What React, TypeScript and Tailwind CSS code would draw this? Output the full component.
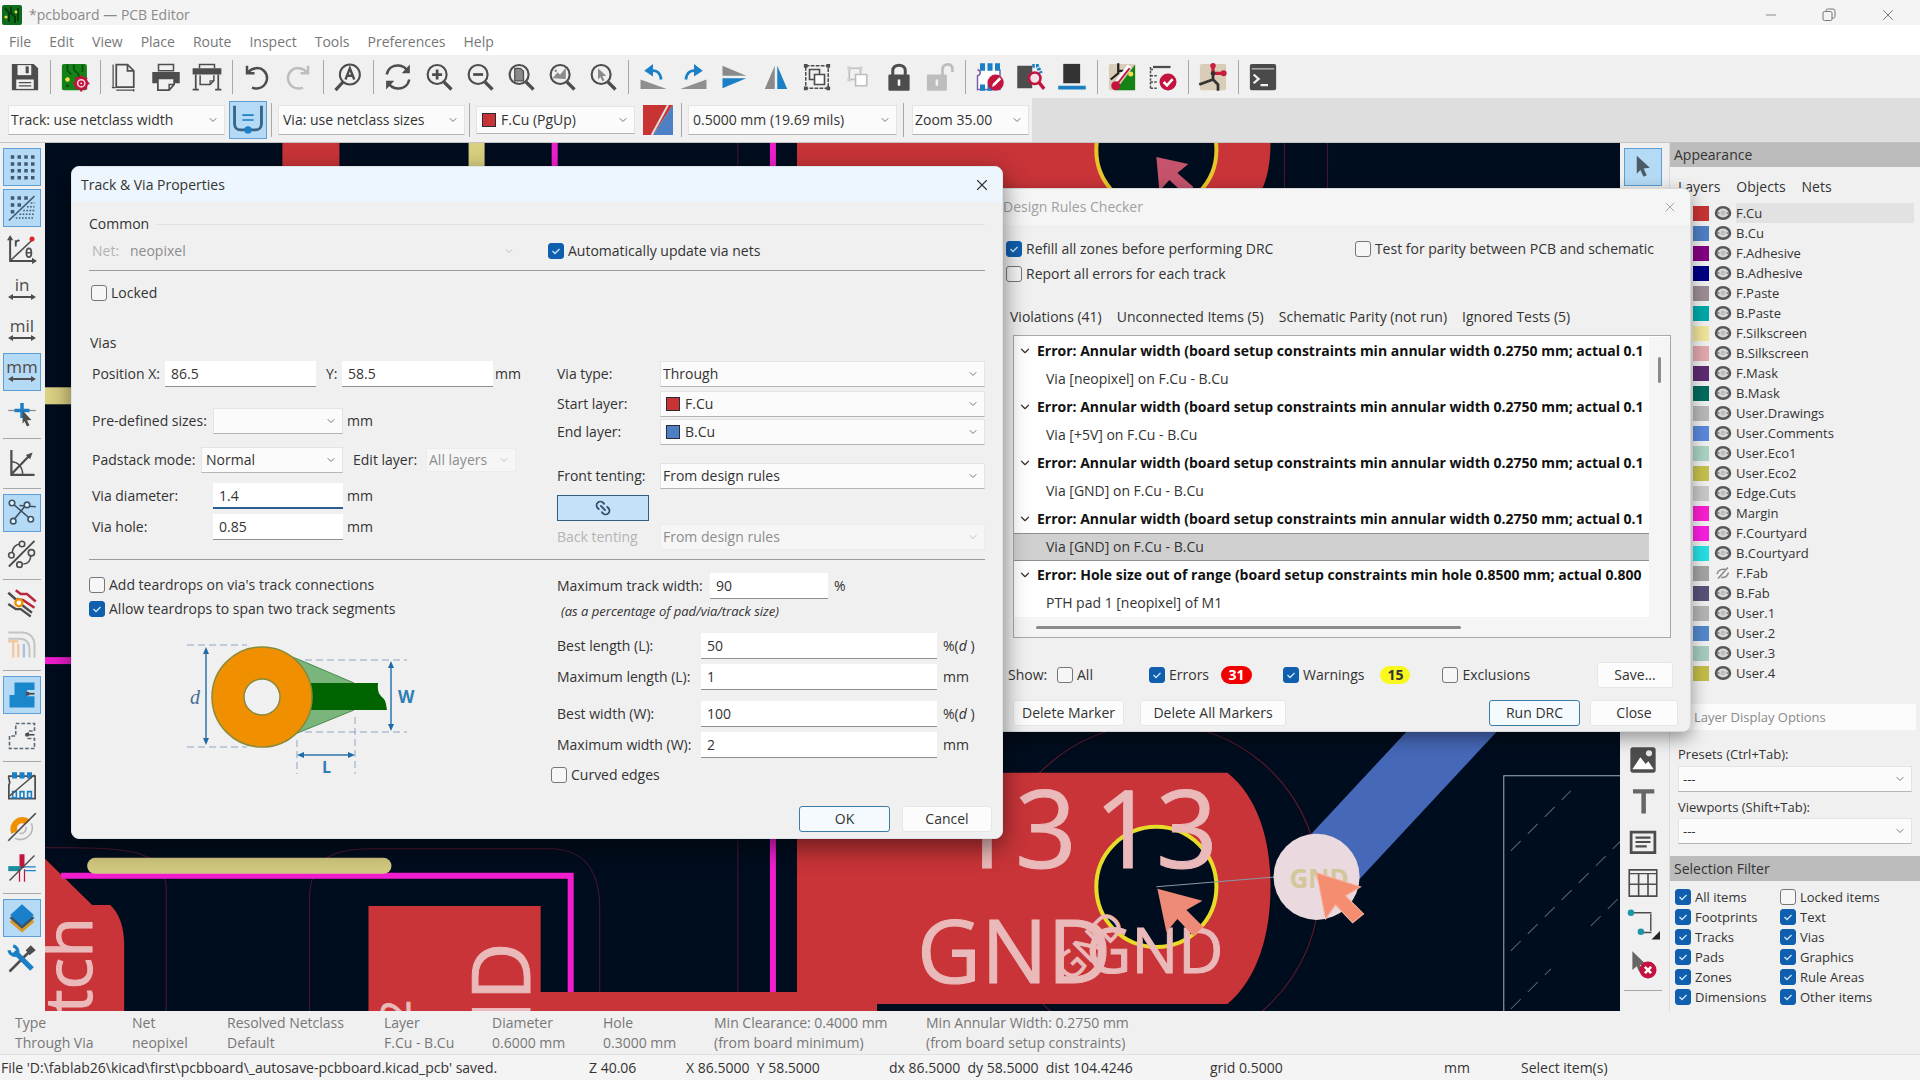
import type { ReactNode } from "react";
import { ChevronDown, X, Minus, Link2 } from "lucide-react";

/* ---------- icons ---------- */

const G = "#4d4d4d";
const B = "#1a7fc4";
const R = "#c2143f";

function Ico({ children, size = "size-[30px]" }: { children: ReactNode; size?: string }) {
  return (
    <svg viewBox="0 0 24 24" className={size} fill="none" stroke={G} strokeWidth="1.6" aria-hidden="true">
      {children}
    </svg>
  );
}

const Lens = ({ children }: { children?: ReactNode }) => (
  <>
    <circle cx="10.5" cy="10" r="7.6" strokeWidth="1.7" />
    <path d="M16 16l6 6" strokeWidth="2.6" />
    {children}
  </>
);

const icons: Record<string, ReactNode> = {
  save: (
    <Ico>
      <path d="M1.5 1.5h17.500l3.500 3.500v17.500h-21z" fill={G} stroke="none" />
      <path d="M6 2.500h11v8H6z" fill="#f0f0f0" stroke="none" />
      <path d="M12.500 3.500h2.500v5.500h-2.500z" fill={G} stroke="none" />
      <path d="M5 14h14v7.500H5z" fill="#f0f0f0" stroke="none" />
      <path d="M7 16.500h10M7 19h10" strokeWidth="1" />
    </Ico>
  ),
  boardSetup: (
    <Ico>
      <rect x="1.500" y="1.500" width="20" height="21" rx="1.500" fill="#148214" stroke="none" />
      <path d="M6 2v5l3 3M11 2v4l4 4V14M18 2v6" stroke="#0b4f12" strokeWidth="1.400" />
      <circle cx="6" cy="14" r="1.800" fill="#f2e24a" stroke="none" />
      <circle cx="6" cy="19" r="1.200" fill="#0b4f12" stroke="none" />
      <circle cx="17" cy="17" r="4.500" fill="#f7d6dd" stroke={R} strokeWidth="2" />
      <circle cx="17" cy="17" r="1.500" fill="#fff" stroke={R} />
      <path d="M17 10.500v2.500M17 21v2.500M10.500 17H13M21 17h2.500M12.500 12.500l1.500 1.500M20 20l1.500 1.500M12.500 21.500l1.500-1.500M20 14l1.500-1.500" stroke={R} strokeWidth="1.800" />
    </Ico>
  ),
  page: (
    <Ico>
      <path d="M5 2h9l5 5v13H5z" strokeWidth="1.400" />
      <path d="M14 2v5h5" strokeWidth="1.400" />
      <path d="M2.500 2v18M1.500 20.500h3M5 22.500h14M19 21.500v2" strokeWidth="1" />
    </Ico>
  ),
  print: (
    <Ico>
      <path d="M6 2h12v5H6z" strokeWidth="1.200" fill="#f0f0f0" />
      <path d="M1 8h22v9h-4v-3H5v3H1z" fill={G} stroke="none" />
      <path d="M5.500 13h13v5l-4 4.500h-9z" fill="#f0f0f0" strokeWidth="1.400" />
      <path d="M14.500 22v-4h4" strokeWidth="1.200" />
    </Ico>
  ),
  plot: (
    <Ico>
      <path d="M0.500 5h23v5h-23z" fill={G} stroke="none" />
      <path d="M6 5V2h12v3" strokeWidth="1.200" />
      <path d="M3 10v12M21 10v12M0.500 22h5M18.500 22h5" strokeWidth="1.400" />
      <path d="M6.500 10.500v7.500h8l3-3v-4.500" strokeWidth="1.200" />
      <path d="M14.500 18v-3h3" strokeWidth="1" />
    </Ico>
  ),
  undo: (
    <Ico>
      <path d="M4 3v6h6" strokeWidth="2" />
      <path d="M4.500 8.500C8 4.500 14 3.500 17.500 7c4 4 3 10-1.500 13-2.500 1.500-5.500 1.500-8 .5" strokeWidth="2" />
    </Ico>
  ),
  redo: (
    <Ico>
      <g stroke="#bdbdbd" strokeWidth="2">
        <path d="M20 3v6h-6" />
        <path d="M19.500 8.500C16 4.500 10 3.500 6.500 7c-4 4-3 10 1.500 13 2.500 1.500 5.500 1.500 8 .5" />
      </g>
    </Ico>
  ),
  find: (
    <Ico>
      <circle cx="13.500" cy="10" r="8" strokeWidth="1.600" />
      <path d="M8 16l-6 6.500" strokeWidth="2.600" />
      <path d="M10 14l3.500-9 3.500 9M11.200 11h4.600" strokeWidth="1.900" />
    </Ico>
  ),
  refresh: (
    <Ico>
      <path d="M3 10C4 5 8 2.500 12.500 2.800c3 .2 5.500 1.700 7 4.200M21 14c-1 5-5 7.500-9.500 7.200-3-.2-5.500-1.700-7-4.200" strokeWidth="2" />
      <path d="M21.500 2v7h-6.500zM2.500 22v-7H9z" fill={G} stroke="none" />
    </Ico>
  ),
  zoomIn: (
    <Ico>
      <Lens>
        <path d="M6.500 10h8M10.500 6v8" strokeWidth="2.200" />
      </Lens>
    </Ico>
  ),
  zoomOut: (
    <Ico>
      <Lens>
        <path d="M6.500 10h8" strokeWidth="2.200" />
      </Lens>
    </Ico>
  ),
  zoomPage: (
    <Ico>
      <Lens>
        <path d="M7 5h4.500L14 7.500V15H7z" fill="#8a8a8a" stroke={G} strokeWidth="1" />
      </Lens>
    </Ico>
  ),
  zoomObjects: (
    <Ico>
      <Lens>
        <path d="M5.500 12.500l3-3.500 2 2 4-5v7z" fill="#8a8a8a" stroke="#8a8a8a" strokeWidth="1" />
        <circle cx="7" cy="7" r="1" fill="#8a8a8a" stroke="none" />
      </Lens>
    </Ico>
  ),
  zoomTool: (
    <Ico>
      <Lens>
        <path d="M8 5l6.500 6-3 .3 1.700 3.200-1.700.8-1.500-3.300L8 14z" fill="#8a8a8a" stroke="none" />
      </Lens>
    </Ico>
  ),
  rotCcw: (
    <Ico>
      <path d="M2 21.500h21L2 14z" fill="#8f8f8f" stroke="none" />
      <path d="M10 7c5-1 8 2 8.500 7" stroke={B} strokeWidth="2.200" />
      <path d="M12 1.500v10L5 7z" fill={B} stroke="none" />
    </Ico>
  ),
  rotCw: (
    <Ico>
      <path d="M22 21.500H1L22 14z" fill="#8f8f8f" stroke="none" />
      <path d="M14 7c-5-1-8 2-8.500 7" stroke={B} strokeWidth="2.200" />
      <path d="M12 1.500v10L19 7z" fill={B} stroke="none" />
    </Ico>
  ),
  flipV: (
    <Ico>
      <path d="M2 3v8h19z" fill="#8a8a8a" stroke="none" />
      <path d="M2 21v-8h19z" fill={B} stroke="none" />
    </Ico>
  ),
  flipH: (
    <Ico>
      <path d="M3 21.500h8V3z" fill="#8a8a8a" stroke="none" />
      <path d="M21 21.500h-8V3z" fill={B} stroke="none" />
    </Ico>
  ),
  group: (
    <Ico>
      <path d="M3 3h18v18H3z" strokeWidth="1.200" strokeDasharray="3 1" />
      <path d="M6 6h8v8H6z" strokeWidth="1.300" />
      <path d="M10 10h8v8h-8z" fill="#fff" strokeWidth="1.300" />
      <path d="M1.500 1.500h3v3h-3zM19.500 1.500h3v3h-3zM1.500 19.500h3v3h-3zM19.500 19.500h3v3h-3z" fill={G} stroke="none" />
    </Ico>
  ),
  ungroup: (
    <Ico>
      <g stroke="#bdbdbd" strokeWidth="1.300">
        <path d="M5 5h9v9H5z" />
        <path d="M10 10h9v9h-9z" fill="#fff" />
        <path d="M3.500 3.500h3v3h-3zM12.500 3.500h3v3h-3zM3.500 12.500h3v3h-3z" fill="#d0d0d0" stroke="none" />
      </g>
    </Ico>
  ),
  lock: (
    <Ico>
      <path d="M7 11V7c0-6 10-6 10 0v4" strokeWidth="2.400" />
      <rect x="3.500" y="10" width="17" height="13" rx="1" fill={G} stroke="none" />
      <path d="M12 14v5" stroke="#fff" strokeWidth="2" />
    </Ico>
  ),
  unlock: (
    <Ico>
      <path d="M14 11V6c0-5.500 8-5.500 8-.5V8" stroke="#bdbdbd" strokeWidth="2.200" />
      <rect x="1.500" y="10" width="16" height="13" rx="1" fill="#bdbdbd" stroke="none" />
      <path d="M9.500 14v5" stroke="#f0f0f0" strokeWidth="2" />
    </Ico>
  ),
  fpEditor: (
    <Ico>
      <path d="M2 6c3 1 3 4 0 5v11h18V6" strokeWidth="1.200" fill="#fff" stroke="#7b5ea8" />
      <path d="M4 1h4v6H4zM10 1h4v6h-4zM16 1h4v6h-4zM4 18h4v5H4zM10 18h4v5h-4z" fill={B} stroke="none" />
      <circle cx="16.500" cy="16.500" r="6.500" fill={R} stroke="none" />
      <path d="M13.500 20l1-2.800 5-5 1.500 1.500-5 5z" fill="#fff" stroke="none" />
    </Ico>
  ),
  update: (
    <Ico>
      <path d="M1 3h12v18H1z" fill={G} stroke="none" />
      <path d="M13 3h4l3 6" stroke={B} strokeWidth="3" strokeDasharray="2 1" />
      <circle cx="15" cy="13" r="4.600" stroke={R} strokeWidth="2" fill="#f3e3e8" />
      <path d="M18.500 16.500l4 5" stroke={R} strokeWidth="2.600" />
    </Ico>
  ),
  viewer3d: (
    <Ico>
      <path d="M5 1.500h13.500V17H5z" fill="#333" stroke="none" />
      <path d="M1 19h22v3H1z" fill={B} stroke="none" />
    </Ico>
  ),
  updatePcb: (
    <Ico>
      <rect x="1.500" y="1.500" width="21" height="21" rx="1.500" fill="#d9cdb8" stroke="none" />
      <path d="M22.500 2v20.500H7z" fill="#148214" stroke="none" />
      <path d="M9 1v8l-6 5M9 7h5" stroke="#222" strokeWidth="1.800" />
      <path d="M5 20l13-17" stroke="#fff" strokeWidth="3.500" />
      <circle cx="7" cy="19" r="3.600" fill={R} stroke="none" />
      <path d="M7 19L18 5" stroke={R} strokeWidth="1.600" />
      <circle cx="19" cy="9.500" r="2" fill="#f2e24a" stroke="none" />
    </Ico>
  ),
  drc: (
    <Ico>
      <path d="M4 4h14" strokeWidth="1.800" />
      <path d="M2 6h3M2 11h6M2 16h6M2 21h6M2 4v17" strokeWidth="1.200" strokeDasharray="2 1" />
      <circle cx="16" cy="16" r="6.800" fill={R} stroke="none" />
      <path d="M12.500 16l2.700 2.700 4.500-5" stroke="#fff" strokeWidth="2" />
    </Ico>
  ),
  schematic: (
    <Ico>
      <rect x="1.500" y="1.500" width="21" height="21" rx="1.500" fill="#d9cdb8" stroke="none" />
      <path d="M12 9v5l4 4v5M12 14l-11 4" stroke="#333" strokeWidth="2.200" />
      <path d="M12 3v6h8" stroke="#c81e3c" strokeWidth="2.600" />
      <circle cx="12" cy="3" r="2.200" fill="#c81e3c" stroke="none" />
      <circle cx="20.500" cy="9" r="2.400" fill="#c81e3c" stroke="none" />
      <circle cx="12" cy="9" r="1.800" fill="#333" stroke="none" />
    </Ico>
  ),
  console: (
    <Ico>
      <rect x="1.500" y="1.500" width="21" height="21" rx="1.500" fill="#4a4a4a" stroke="none" />
      <path d="M3 5.500h18" stroke="#ddd" strokeWidth=".8" />
      <path d="M4.500 10l4 3.500-4 3.500M10 18.500h6" stroke="#f0f0f0" strokeWidth="1.800" />
    </Ico>
  ),
  autoTrack: (
    <Ico size="size-[34px]">
      <path d="M2.500 2v12.500c0 3 2 4.500 4 4.500h11c2 0 4-1.500 4-4.500V2" stroke="#3b6386" strokeWidth="2" />
      <path d="M8 8.500h8M8 12h8" stroke={B} strokeWidth="1.200" />
      <circle cx="12" cy="19" r="2.600" fill={B} stroke="none" />
    </Ico>
  ),
  layerPair: (
    <Ico>
      <path d="M0 0h24L8 24H0z" fill="#c83434" stroke="none" />
      <path d="M24 0v24H8z" fill="#4d7fc4" stroke="none" />
      <path d="M20 0L7 24" stroke="#ddd" strokeWidth="1.600" />
    </Ico>
  ),
  grid: (
    <Ico>
      <path d="M3 4h19M3 9.500h19M3 15h19M3 20.500h19" stroke="#3f5a75" strokeWidth="2.800" strokeDasharray="2.800 2.600" />
    </Ico>
  ),
  gridOver: (
    <Ico>
      <path d="M3 4h14M3 9.500h9M3 15h4" stroke="#3f5a75" strokeWidth="2.800" strokeDasharray="2.800 2.600" />
      <path d="M1.500 22L22 2.500" stroke="#3f5a75" strokeWidth="1.200" />
      <path d="M19 8h3M16 11h6M13 14h9M10 17h12M7 20h15" stroke="#3f5a75" strokeWidth="1.300" strokeDasharray="1.300 1.200" />
    </Ico>
  ),
  polar: (
    <Ico>
      <path d="M2.500 2v19.500H22" />
      <path d="M3 21L20 5" strokeWidth="1.300" />
      <circle cx="20" cy="4" r="2" fill="#d22" stroke="none" />
      <path d="M0 5l2.500-4L5 5zM20 19l4 2.500-4 2.500z" fill={G} stroke="none" />
      <path d="M7 10V5M7 7c1-2 2-2 3-1.500" strokeWidth="1.500" />
      <ellipse cx="17.500" cy="15" rx="2" ry="3.500" strokeWidth="1.400" />
      <path d="M15.500 15h4" strokeWidth="1.200" />
    </Ico>
  ),
  cursor: (
    <Ico>
      <path d="M1 10h22" strokeWidth="1" stroke="#888" />
      <path d="M12 4v12M6 10h12" stroke={B} strokeWidth="2.800" />
      <path d="M12.500 10l7 7.500-3.500.2 2 4-2 1-2-4.200-1.500 2z" fill={G} stroke="none" />
    </Ico>
  ),
  angle: (
    <Ico>
      <path d="M3.500 1.500v20H22M3.500 21L18 6" strokeWidth="1.800" />
      <path d="M3.500 11c5 0 9 4 9 10" strokeWidth="1.200" />
      <path d="M20.500 3.500l-5.500 2 3.500 3.500z" fill={G} stroke="none" />
    </Ico>
  ),
  ratsnest: (
    <Ico>
      <path d="M4 4l15 13M5 18l9-11M10 6l13 1" stroke="#3d5468" strokeWidth="1.300" />
      <g fill="#e8f4ff" stroke="#3d5468" strokeWidth="1.300">
        <circle cx="4" cy="4" r="2.200" />
        <circle cx="16" cy="5.500" r="2.200" />
        <circle cx="5" cy="18.500" r="2.200" />
        <circle cx="19" cy="17" r="2.200" />
      </g>
    </Ico>
  ),
  curved: (
    <Ico>
      <path d="M1.500 22L22 1.500" strokeWidth="1.500" />
      <path d="M4 12c0-5 3-8 7-8M13 20c4 0 6-3 6-7" strokeWidth="1.300" />
      <g fill="#f0f0f0" strokeWidth="1.300">
        <circle cx="12" cy="4" r="2.200" />
        <circle cx="3.500" cy="13" r="2.200" />
        <circle cx="10" cy="20.500" r="2.200" />
        <circle cx="19.500" cy="11" r="2.500" />
      </g>
    </Ico>
  ),
  netHl: (
    <Ico>
      <path d="M7 1l4 3h5l7 6M8 8l5 1 9 6" stroke="#b8283f" strokeWidth="2" />
      <path d="M1 3l8 7" strokeWidth="2" />
      <path d="M1 12l6 4h4l8 6M11 12l9 7" strokeWidth="1.800" />
      <circle cx="9.500" cy="11" r="2.800" fill="#fff" stroke="#f09000" strokeWidth="1.800" />
    </Ico>
  ),
  netColors: (
    <Ico>
      <path d="M1 7h9c5 0 8 3 8 9v6" stroke="#c4c4c4" strokeWidth="1.600" />
      <path d="M1 2h11c6 0 10 4 10 10v10" stroke="#c4c4c4" strokeWidth="1.600" />
      <path d="M5 9v13M9 11v11" stroke="#f3c9a4" strokeWidth="2" />
      <path d="M13.500 11v11" stroke="#a9c4de" strokeWidth="2" />
      <path d="M1 9h8" stroke="#f3c9a4" strokeWidth="2" />
    </Ico>
  ),
  zoneFill: (
    <Ico>
      <path d="M6 2h16v6h-6v5h6v9H2V12h4z" fill="#1a86cc" stroke="none" />
      <path d="M16 11h6" stroke={G} strokeWidth="1.500" />
      <circle cx="16.500" cy="11" r="1.600" fill={G} stroke="none" />
    </Ico>
  ),
  zoneOutline: (
    <Ico>
      <path d="M7 2h15v6h-5v6h5v8H2V12h5z" strokeWidth="1.300" strokeDasharray="3 1.500" stroke="#5a6b7a" />
      <circle cx="16" cy="11" r="1.600" fill={G} stroke="none" />
      <path d="M16 11h6" strokeWidth="1.300" />
    </Ico>
  ),
  padSketch: (
    <Ico>
      <path d="M1.500 4c-1 2 2 5 0 7v11h21V4z" strokeWidth="1.400" />
      <path d="M4 1h4v5H4zM10 1h4v5h-4zM16 1h4v5h-4z" fill={B} stroke="none" />
      <path d="M4.500 16.500h3v5h-3zM10.500 16.500h3v5h-3zM16.500 16.500h3v5h-3z" stroke={B} strokeWidth="1.300" />
      <path d="M2 20L22 3" strokeWidth="1.200" />
    </Ico>
  ),
  viaSketch: (
    <Ico>
      <path d="M3.500 17.500a9.500 9.500 0 0 1 15-11l-4 3.500a4 4 0 0 0-6 5z" fill="#f09000" stroke="none" />
      <path d="M19.500 9a9.500 9.500 0 0 1-13 12M15 12a4 4 0 0 1-5 5" stroke="#b5b5b5" strokeWidth="1.200" />
      <path d="M1 23L23 1" strokeWidth="1.400" />
    </Ico>
  ),
  trackSketch: (
    <Ico>
      <path d="M12 1v11" stroke={R} strokeWidth="4" />
      <path d="M1 12.500h10" stroke="#1a8ea0" strokeWidth="4" />
      <path d="M10 13v10M14 13v10" stroke={R} strokeWidth="1" />
      <path d="M14 11h9M14 14h9" stroke={B} strokeWidth="1" />
      <path d="M2 22L22 2" strokeWidth="1.200" />
    </Ico>
  ),
  layersMgr: (
    <Ico>
      <path d="M12 7l10 8-10 8.500L2 15z" fill="#d99a2b" stroke="none" />
      <path d="M12 4l10 8-10 8.500L2 12z" fill="#3b5568" stroke="none" />
      <path d="M12 1l9.500 8.500L12 18 2.500 9.500z" fill="#1a80cc" stroke="none" />
    </Ico>
  ),
  tools: (
    <Ico>
      <path d="M2 22L17 7" strokeWidth="2" />
      <path d="M15 5l4-4 4 4-5 4z" fill={G} stroke="none" />
      <path d="M6 6l14 14" stroke={B} strokeWidth="4.200" />
      <path d="M1.500 5a5 5 0 0 0 7 3.500M5 1.500A5 5 0 0 1 8.500 8" stroke={B} strokeWidth="2.600" />
    </Ico>
  ),
  select: (
    <Ico>
      <path d="M7 3l10.500 9.500-5 .6 2.500 5.400-2.600 1.200-2.500-5.400-2.900 3z" fill="#4d5b66" stroke="none" />
    </Ico>
  ),
  image: (
    <Ico size="size-[32px]">
      <rect x="2.500" y="2.500" width="19" height="19" rx="2" fill={G} stroke="none" />
      <path d="M4 19l6-9 4 5 2-2 4 6z" fill="#fff" stroke="none" />
      <circle cx="16.500" cy="7" r="2.300" fill="#e8e8e8" stroke="none" />
    </Ico>
  ),
  text: (
    <Ico>
      <path d="M4 2.500h17v3.500h-6.700v16h-3.600v-16H4z" fill="#666" stroke="none" />
    </Ico>
  ),
  textBox: (
    <Ico>
      <path d="M2.500 4h19v16.500h-19z" strokeWidth="2.200" />
      <path d="M6 8.500h12M6 12h12M6 15.500h9" strokeWidth="1.700" />
    </Ico>
  ),
  table: (
    <Ico>
      <path d="M1 1.500h22v21H1z" strokeWidth="1.300" />
      <path d="M1 4.500h22" strokeWidth="1" />
      <path d="M8.500 4.500v18M16 4.500v18M1 13h22" strokeWidth="1.300" />
    </Ico>
  ),
  dimension: (
    <Ico size="size-[34px]">
      <path d="M4 4h14M12 18h6M17.500 5v12" strokeWidth="1" />
      <circle cx="3.500" cy="4" r="2.300" fill="#1d96a8" stroke="none" />
      <circle cx="10.500" cy="17.500" r="2.300" fill="#1d96a8" stroke="none" />
      <path d="M24 17v6h-6z" fill="#222" stroke="none" />
    </Ico>
  ),
  deleteTool: (
    <Ico>
      <path d="M3.500 1l11 10.500-5 .5 2 4.500-2.500 1-2-4.500-3.500 3z" fill="#666" stroke="none" />
      <circle cx="16" cy="16" r="6.800" fill={R} stroke="none" />
      <path d="M13.500 13.500l5 5M18.500 13.500l-5 5" stroke="#fff" strokeWidth="2" />
    </Ico>
  ),
};

function UnitIcon({ unit }: { unit: string }) {
  return (
    <span className="flex flex-col items-center pb-1">
      <span className="text-[17px] leading-[18px] text-[#4d4d4d]">{unit}</span>
      <svg viewBox="0 0 28 6" className="h-[6px] w-[28px]" aria-hidden="true">
        <path d="M0 3l5-3v2h18V0l5 3-5 3V4H5v2z" fill={G} />
      </svg>
    </span>
  );
}

/* ---------- controls ---------- */

type ToolDef = { icon: string; active?: boolean } | "sep";

function ToolButton({ icon, active }: { icon: string; active?: boolean }) {
  return (
    <button
      type="button"
      aria-label={icon}
      aria-pressed={!!active}
      className={`flex size-[38px] shrink-0 items-center justify-center border ${active ? "border-[#5b9fd6] bg-[#b5daf5]" : "border-transparent"}`}
    >
      {icons[icon] ?? <UnitIcon unit={icon} />}
    </button>
  );
}

function VTools({ items }: { items: ToolDef[] }) {
  return (
    <>
      {items.map((t, i) =>
        t === "sep" ? (
          <div key={i} className="flex h-[6px] w-[38px] shrink-0 items-center">
            <div className="h-px w-full bg-[#a8a8a8]" />
          </div>
        ) : (
          <ToolButton key={i} icon={t.icon} active={t.active} />
        )
      )}
    </>
  );
}

function Check({ label, on, gap = "gap-1" }: { label: string; on?: boolean; gap?: string }) {
  return (
    <label className={`flex items-center whitespace-nowrap ${gap}`}>
      <span className="relative flex size-4 shrink-0">
        <input
          type="checkbox"
          defaultChecked={on}
          className="peer size-4 appearance-none rounded-[3px] border border-[#777] bg-[#f6f6f6] checked:border-[#0f5fae] checked:bg-[#0f5fae]"
        />
        <svg viewBox="0 0 16 16" className="pointer-events-none absolute inset-0 hidden size-4 peer-checked:block" aria-hidden="true">
          <path d="M4.500 8l2.500 2.500L11.500 6" fill="none" stroke="#cfe6fa" strokeWidth="1.300" />
        </svg>
      </span>
      {label}
    </label>
  );
}

function Select({
  value,
  label,
  className = "",
  swatch,
  disabled,
  flat,
  chevron = "right-1.5",
  pad = "pl-1",
}: {
  value: string;
  label: string;
  className?: string;
  swatch?: string;
  disabled?: boolean;
  flat?: boolean;
  chevron?: string;
  pad?: string;
}) {
  return (
    <span className={`relative flex ${className}`}>
      <select
        aria-label={label}
        disabled={disabled}
        className={`w-full appearance-none truncate disabled:text-[#8c8c8c] ${
          flat
            ? "bg-transparent"
            : "border border-[#e4e4e4] border-b-[#b5b5b5] bg-[#fbfbfb] disabled:border-[#ececec] disabled:bg-[#f6f6f6]"
        } ${swatch ? "pl-6" : pad}`}
      >
        <option>{value}</option>
      </select>
      {swatch && (
        <svg viewBox="0 0 14 14" className="pointer-events-none absolute top-1/2 left-1.5 size-[14px] -translate-y-1/2" aria-hidden="true">
          <rect x=".5" y=".5" width="13" height="13" fill={swatch} stroke="#2a2a3a" />
        </svg>
      )}
      <ChevronDown className={`pointer-events-none absolute top-1/2 size-3 -translate-y-1/2 ${chevron} ${disabled ? "text-[#c0c0c0]" : "text-[#777]"}`} />
    </span>
  );
}

function Field({ value, label, className = "", focus }: { value: string; label: string; className?: string; focus?: boolean }) {
  return (
    <input
      type="text"
      aria-label={label}
      defaultValue={value}
      className={`h-[26px] bg-white pl-1.5 ${focus ? "border-b-2 border-[#2b5f94]" : "border-b border-[#8f8f8f]"} ${className}`}
    />
  );
}

function Btn({ children, primary, className = "" }: { children: ReactNode; primary?: boolean; className?: string }) {
  return (
    <button
      type="button"
      className={`h-[26px] rounded-[3px] border whitespace-nowrap ${primary ? "border-[#3d7ca8] bg-[#f4fafd]" : "border-[#e6e6e6] bg-[#fcfcfc]"} ${className}`}
    >
      {children}
    </button>
  );
}

/* ---------- board canvas ---------- */

function Board() {
  const pink = "#eab9b9";
  return (
    <svg
      viewBox="45 143 1575 867"
      preserveAspectRatio="xMidYMid slice"
      className="size-full bg-[#000d1e]"
      fontFamily="'Open Sans',sans-serif"
      aria-label="Board"
    >
      <g fill="none" stroke="#4d1830" strokeWidth="1">
        <path d="M45 847h30c60 0 90 5 92 40v123M310 1010V900c0-40 20-52 60-52h180c40 0 50 30 50 60v102" />
        <path d="M738 143v867M1284 143v45M1327 143v45" />
        <circle cx="1156" cy="886" r="163" stroke="#6b1a2c" />
      </g>
      <path d="M283 143h57v30h-57z" fill="#c83438" />
      <path d="M469 143h16v30h-16z" fill="#d9d080" />
      <path d="M45 387h30v17H45z" fill="#dcd284" />
      <path d="M45 660h30" stroke="#f01ecf" strokeWidth="7" />
      <path d="M555 143v30" stroke="#f01ecf" strokeWidth="6" />
      <path d="M773 143v867" stroke="#f01ecf" strokeWidth="6" />
      <path d="M45 857l48 47h18c9 8 14 22 14 40v66H45z" fill="#c83438" />
      <path d="M62 875h509v118" fill="none" stroke="#f01ecf" strokeWidth="6" />
      <rect x="88" y="857" width="304" height="16" rx="8" fill="#d3ca80" />
      <path d="M369 905h172v86h257v19H369z" fill="#c83438" />
      <path d="M797 143h473c0 20-4 50-20 60H797z" fill="#c83438" />
      <path d="M797 772h430c30 24 43 66 43 114s-13 92-43 117H797z" fill="#c83438" />
      <path d="M797 990h80v20h-80z" fill="#c83438" />
      <circle cx="1156" cy="150" r="60" fill="#000d1e" stroke="#e8c62a" strokeWidth="4" />
      <path d="M1316 876l240-258" stroke="#4668b8" strokeWidth="66" />
      <circle cx="1156" cy="886" r="60" fill="#000d1e" stroke="#e8dc2a" strokeWidth="4" />
      <g fill="none" stroke="#b9bec8" strokeOpacity=".5">
        <path d="M1503 1010V775h117" stroke="#d0d4dc" strokeOpacity=".8" />
        <path d="M1510 850l60-60M1510 950l110-110M1510 1008l40-40M1590 925l30-30" strokeDasharray="14 10" />
      </g>
      <path d="M1156 886l120-10" stroke="#8b98a8" strokeWidth="1" />
      <g fill={pink} stroke={pink} strokeWidth="1">
        <text x="953" y="867" fontSize="108">13</text>
        <text x="1094" y="867" fontSize="108">13</text>
        <text x="917" y="982" fontSize="88">GND</text>
        <text x="1086" y="972" fontSize="62">GND</text>
        <text x="1070" y="982" fontSize="36" transform="rotate(-45 1070 982)">GND</text>
        <text transform="translate(93 1012) rotate(-90)" fontSize="66">tch</text>
        <text transform="translate(530 1118) rotate(-90)" fontSize="80">GND</text>
        <text transform="translate(410 1022) rotate(-90)" fontSize="40">2</text>
      </g>
      <circle cx="1316" cy="876" r="43" fill="#ead9de" />
      <text x="1289" y="887" fontSize="26" fontWeight="700" fill="#d3c79a">GND</text>
      <path d="M1156 157l32 7-11 9 16 14-8 8-16-15-10 11z" fill="#c4536b" />
      <path d="M1157 888l45 12-16 9 17 17-10 9-16-17-11 13z" fill="#ee8a78" />
      <path d="M1316 872l44 14-15 9 18 18-11 9-17-18-10 14z" fill="#f58d70" stroke="#f7b29e" />
    </svg>
  );
}

/* ---------- dialogs ---------- */

function TeardropDiagram() {
  return (
    <svg viewBox="180 635 240 145" className="h-[145px] w-[240px]" fontFamily="'Open Sans',sans-serif" aria-label="Teardrop dimensions">
      <g stroke="#8fa6c4" strokeDasharray="7 4" fill="none">
        <path d="M187 645h60M187 747h60M305 660h102M305 732h102M297 740v34M355 717v57" />
      </g>
      <path d="M290 656l10 4 54 23v27l-54 22-10 4z" fill="#7ab57c" stroke="#4a8a4e" />
      <path d="M300 683h78c-1 10 2 12 5 15s3 6 4 12h-87z" fill="#006400" />
      <circle cx="262" cy="697" r="50" fill="#f09000" stroke="#8a8a3a" strokeWidth="1.500" />
      <circle cx="262" cy="697" r="18" fill="#f0f0f0" stroke="#8a8a3a" strokeWidth="1.500" />
      <g stroke="#2f74ac" fill="#1f6ca8">
        <path d="M206 649v94M391 663v66M300 755h52" fill="none" strokeWidth="1.500" />
        <path d="M206 647l3 7h-6zM206 745l3-7h-6zM391 661l3 7h-6zM391 731l3-7h-6zM297 755l7-3v6zM355 755l-7-3v6z" stroke="none" />
      </g>
      <text x="190" y="704" fontSize="20" fontStyle="italic" fontFamily="'Liberation Serif',serif" fill="#4a6d94">d</text>
      <text x="398" y="703" fontSize="17" fontWeight="700" fill="#2f7fb4">W</text>
      <text x="322" y="773" fontSize="16" fontWeight="700" fill="#2f7fb4">L</text>
    </svg>
  );
}

function LabelledField({ label, value, unit, className }: { label: string; value: string; unit: ReactNode; className: string }) {
  return (
    <div className={`flex items-center ${className}`}>
      <span className="w-[144px]">{label}</span>
      <Field label={label} value={value} className="w-[236px]" />
      <span className="ml-1.5">{unit}</span>
    </div>
  );
}

const perD = (
  <>
    %(<i>d</i> )
  </>
);

function TrackViaDialog() {
  return (
    <section
      role="dialog"
      aria-label="Track & Via Properties"
      className="absolute top-[166px] left-[71px] z-20 flex w-[932px] flex-col overflow-hidden rounded-lg border border-[#dde5ea] bg-[#f0f0f0] text-[#333] shadow-[0_8px_24px_rgba(0,0,0,0.5)]"
    >
      <header className="flex h-[35px] items-center justify-between bg-[#edf6fc] pr-[11px] pl-[9px]">
        <h2 className="text-[14px]">Track &amp; Via Properties</h2>
        <button type="button" aria-label="Close">
          <X className="size-[18px] text-[#333]" strokeWidth={1.5} />
        </button>
      </header>

      <div className="flex flex-col px-[17px]">
        <div className="mt-2.5 flex h-6 items-center gap-2">
          <span>Common</span>
          <div className="h-px flex-1 bg-[#e0e0e0]" />
        </div>
        <div className="mt-0.5 flex h-[26px] items-center">
          <span className="w-[41px] pl-[3px] text-[#b4b4b4]">Net:</span>
          <Select label="Net" value="neopixel" disabled flat pad="pl-0" className="h-6 w-[391px]" />
          <div className="ml-[27px]">
            <Check label="Automatically update via nets" on />
          </div>
        </div>
        <div className="mt-1.5 h-px bg-[#9c9c9c]" />
        <div className="mt-2.5 flex h-6 pl-0.5">
          <Check label="Locked" />
        </div>

        <div className="mt-[26px] flex h-6 items-center pl-px">Vias</div>

        <div className="mt-1.5 flex">
          <div className="flex w-[468px] flex-col pl-[3px]">
            <div className="flex items-center">
              <span className="w-[73px]">Position X:</span>
              <Field label="Position X" value="86.5" className="w-[151px]" />
              <span className="ml-[10px] w-[16px]">Y:</span>
              <Field label="Position Y" value="58.5" className="w-[151px]" />
              <span className="ml-0.5">mm</span>
            </div>
            <div className="mt-[21px] flex items-center">
              <span className="w-[121px]">Pre-defined sizes:</span>
              <Select label="Pre-defined sizes" value="" className="h-[26px] w-[130px]" />
              <span className="ml-1">mm</span>
            </div>
            <div className="mt-[13px] flex items-center">
              <span className="w-[109px]">Padstack mode:</span>
              <Select label="Padstack mode" value="Normal" pad="pl-1" className="h-[26px] w-[142px]" />
              <span className="ml-[10px] w-[73px]">Edit layer:</span>
              <Select label="Edit layer" value="All layers" disabled pad="pl-0.5" className="h-6 w-[90px]" />
            </div>
            <div className="mt-2.5 flex items-center">
              <span className="w-[121px]">Via diameter:</span>
              <Field label="Via diameter" value="1.4" focus className="w-[130px]" />
              <span className="ml-1">mm</span>
            </div>
            <div className="mt-[5px] flex items-center">
              <span className="w-[121px]">Via hole:</span>
              <Field label="Via hole" value="0.85" className="w-[130px]" />
              <span className="ml-1">mm</span>
            </div>
          </div>

          <div className="flex min-w-0 flex-1 flex-col">
            <div className="flex items-center">
              <span className="w-[103px]">Via type:</span>
              <Select label="Via type" value="Through" className="h-[26px] flex-1" pad="pl-0.5" />
            </div>
            <div className="mt-1 flex items-center">
              <span className="w-[103px]">Start layer:</span>
              <Select label="Start layer" value="F.Cu" swatch="#c83434" className="h-[26px] flex-1" />
            </div>
            <div className="mt-0.5 flex items-center">
              <span className="w-[103px]">End layer:</span>
              <Select label="End layer" value="B.Cu" swatch="#4d7fc4" className="h-[26px] flex-1" />
            </div>
            <div className="mt-[18px] flex items-center">
              <span className="w-[103px]">Front tenting:</span>
              <Select label="Front tenting" value="From design rules" className="h-[26px] flex-1" pad="pl-0.5" />
            </div>
            <button type="button" aria-label="Link tenting" className="mt-1.5 flex h-[26px] w-[92px] items-center justify-center border border-[#2f5f80] bg-[#c3e2fa]">
              <Link2 className="size-[18px] rotate-45 text-[#33506a]" strokeWidth={2.5} />
            </button>
            <div className="mt-[3px] flex items-center">
              <span className="w-[103px] text-[#b4b4b4]">Back tenting</span>
              <Select label="Back tenting" value="From design rules" disabled className="h-[26px] flex-1" pad="pl-0.5" />
            </div>
          </div>
        </div>

        <div className="mt-[9px] h-px bg-[#9c9c9c]" />

        <div className="mt-[13px] flex">
          <div className="flex w-[468px] flex-col">
            <div className="flex h-6">
              <Check label="Add teardrops on via's track connections" />
            </div>
            <div className="flex h-6">
              <Check label="Allow teardrops to span two track segments" on />
            </div>
            <div className="mt-3.5 ml-[91px]">
              <TeardropDiagram />
            </div>
          </div>
          <div className="flex flex-col">
            <div className="flex items-center">
              <span className="w-[153px]">Maximum track width:</span>
              <Field label="Maximum track width" value="90" className="w-[118px]" />
              <span className="ml-1.5">%</span>
            </div>
            <i className="mt-0.5 ml-1 text-[13px] leading-5">(as a percentage of pad/via/track size)</i>
            <LabelledField label="Best length (L):" value="50" unit={perD} className="mt-3" />
            <LabelledField label="Maximum length (L):" value="1" unit="mm" className="mt-[5px]" />
            <LabelledField label="Best width (W):" value="100" unit={perD} className="mt-[11px]" />
            <LabelledField label="Maximum width (W):" value="2" unit="mm" className="mt-[5px]" />
            <div className="mt-[5px] -ml-1.5 flex h-6">
              <Check label="Curved edges" />
            </div>
          </div>
        </div>
      </div>

      <div className="mt-[19px] mb-1.5 flex justify-end gap-3 pr-2.5">
        <Btn primary className="w-[91px]">OK</Btn>
        <Btn className="w-[90px]">Cancel</Btn>
      </div>
    </section>
  );
}

const ANNULAR = "Error: Annular width (board setup constraints min annular width 0.2750 mm; actual 0.1";
const violations = [
  { title: ANNULAR, item: "Via [neopixel] on F.Cu - B.Cu" },
  { title: ANNULAR, item: "Via [+5V] on F.Cu - B.Cu" },
  { title: ANNULAR, item: "Via [GND] on F.Cu - B.Cu" },
  { title: ANNULAR, item: "Via [GND] on F.Cu - B.Cu", selected: true },
  { title: "Error: Hole size out of range (board setup constraints min hole 0.8500 mm; actual 0.800", item: "PTH pad 1 [neopixel] of M1" },
];

function DrcDialog() {
  return (
    <section
      role="dialog"
      aria-label="Design Rules Checker"
      className="absolute top-[188px] left-[992px] z-10 flex w-[699px] flex-col overflow-hidden rounded-lg border border-[#d8d8d8] bg-[#f0f0f0] text-[#333] shadow-[0_6px_18px_rgba(0,0,0,0.4)]"
    >
      <header className="flex h-[36px] items-center justify-between bg-[#f5f5f5] pr-3 pl-[10px] text-[#a0a0a0]">
        <h2>Design Rules Checker</h2>
        <button type="button" aria-label="Close">
          <X className="size-4" strokeWidth={1.4} />
        </button>
      </header>
      <div className="mt-[11px] flex h-[26px] items-center justify-between pr-[36px] pl-[13px]">
        <Check label="Refill all zones before performing DRC" on />
        <Check label="Test for parity between PCB and schematic" />
      </div>
      <div className="flex h-[24px] items-center pl-[13px]">
        <Check label="Report all errors for each track" />
      </div>
      <div role="tablist" className="mt-4 flex h-[30px] items-center gap-[15px] pl-[17px]">
        {["Violations (41)", "Unconnected Items (5)", "Schematic Parity (not run)", "Ignored Tests (5)"].map((t, i) => (
          <button key={t} type="button" role="tab" aria-selected={i === 0} className="whitespace-nowrap">
            {t}
          </button>
        ))}
      </div>
      <div className="mt-[3px] mr-[19px] ml-5 border border-[#a8a8a8] bg-white pt-px">
        <div className="flex">
          <ul className="min-w-0 flex-1">
            {violations.map((v, i) => (
              <li key={i}>
                <div className="flex h-7 items-center gap-[5px] overflow-hidden pl-1">
                  <ChevronDown className="size-[14px] shrink-0" />
                  <b className="whitespace-nowrap text-[#111]">{v.title}</b>
                </div>
                <div className={`flex h-7 items-center border-y pl-8 ${v.selected ? "border-[#8f8f8f] bg-[#d0d0d0]" : "border-transparent"}`}>{v.item}</div>
              </li>
            ))}
          </ul>
          <div className="flex w-[21px] justify-center bg-[#f5f5f5] pt-5">
            <div className="h-[26px] w-[3px] rounded bg-[#8a8a8a]" />
          </div>
        </div>
        <div className="flex h-[20px] items-center bg-[#f5f5f5] pl-[22px]">
          <div className="h-[3px] w-[425px] rounded bg-[#8a8a8a]" />
        </div>
      </div>
      <div className="mt-[25px] flex h-6 items-center pr-[17px] pl-[15px]">
        <span className="w-[49px]">Show:</span>
        <div className="w-[92px]">
          <Check label="All" />
        </div>
        <Check label="Errors" on />
        <span className="ml-3 h-[18px] w-[31px] rounded-full bg-[#f00000] text-center leading-[18px] font-bold text-white">31</span>
        <div className="ml-[31px]">
          <Check label="Warnings" on />
        </div>
        <span className="ml-4 h-[18px] w-[30px] rounded-full bg-[#f8f81e] text-center leading-[18px] font-bold">15</span>
        <div className="ml-[32px]">
          <Check label="Exclusions" />
        </div>
        <Btn className="ml-auto w-[76px]">Save...</Btn>
      </div>
      <div className="mt-[13px] mb-[5px] flex items-center pr-3 pl-5">
        <Btn className="w-[111px]">Delete Marker</Btn>
        <Btn className="ml-4 w-[146px]">Delete All Markers</Btn>
        <Btn primary className="ml-auto w-[91px]">Run DRC</Btn>
        <Btn className="ml-2.5 w-[88px]">Close</Btn>
      </div>
    </section>
  );
}

/* ---------- side panel ---------- */

const layers: [string, string][] = [
  ["F.Cu", "#c83434"],
  ["B.Cu", "#4d7fc4"],
  ["F.Adhesive", "#840084"],
  ["B.Adhesive", "#000084"],
  ["F.Paste", "#9c8d94"],
  ["B.Paste", "#00a8a8"],
  ["F.Silkscreen", "#efe49a"],
  ["B.Silkscreen", "#e0a8ac"],
  ["F.Mask", "#5e2a72"],
  ["B.Mask", "#036b5d"],
  ["User.Drawings", "#b8b8b8"],
  ["User.Comments", "#5b88dc"],
  ["User.Eco1", "#aad2c2"],
  ["User.Eco2", "#c6c04c"],
  ["Edge.Cuts", "#c8c8c8"],
  ["Margin", "#fa1ecf"],
  ["F.Courtyard", "#fa1ee0"],
  ["B.Courtyard", "#26dfe4"],
  ["F.Fab", "#a3a3a3"],
  ["B.Fab", "#575278"],
  ["User.1", "#b4b4b4"],
  ["User.2", "#5288cc"],
  ["User.3", "#a6ccbe"],
  ["User.4", "#c4bc48"],
];

function Eye({ off }: { off?: boolean }) {
  return (
    <svg viewBox="0 0 18 16" className="h-4 w-[18px]" aria-hidden="true">
      {off ? (
        <path d="M4 13.500L14 2.500M3 9c1-4 5-5.500 9-4.500M7 12.500c4 .5 6.500-1.500 7.500-5" fill="none" stroke="#8a8a8a" strokeWidth="1.500" />
      ) : (
        <>
          <ellipse cx="9" cy="8" rx="7" ry="5.800" fill="#d8d8d8" stroke="#555" strokeWidth="2.600" />
          <path d="M3.500 8h2M12.500 8h2" stroke="#555" />
          <circle cx="9" cy="8" r="2.400" fill="#bdbdbd" />
        </>
      )}
    </svg>
  );
}

function SidePanel() {
  const left = ["All items", "Footprints", "Tracks", "Pads", "Zones", "Dimensions"];
  const right = ["Locked items", "Text", "Vias", "Graphics", "Rule Areas", "Other items"];
  return (
    <aside className="flex w-[251px] shrink-0 flex-col border-l border-[#dcdcdc] text-[13px] text-[#333]">
      <h3 className="h-[24px] bg-[#bcbcbc] pl-1 text-[14px] leading-[24px]">Appearance</h3>
      <div role="tablist" className="mt-[7px] flex h-[26px] items-center gap-4 pl-2 text-[14px]">
        {["Layers", "Objects", "Nets"].map((t, i) => (
          <button key={t} type="button" role="tab" aria-selected={i === 0}>
            {t}
          </button>
        ))}
      </div>
      <ul className="mt-[3px] pr-1.5 pl-[23px]">
        {layers.map(([name, color], i) => (
          <li key={name} className="flex h-5 items-center">
            <span className="h-[15px] w-4" style={{ backgroundColor: color }} />
            <span className="ml-[5px]">
              <Eye off={name === "F.Fab"} />
            </span>
            <span className={`ml-1 h-5 flex-1 leading-5 ${i === 0 ? "bg-[#e2e2e2]" : ""}`}>{name}</span>
          </li>
        ))}
      </ul>
      <button type="button" className="mt-[21px] mr-1 h-[26px] bg-[#fcfcfc] pl-6 text-left text-[#8a8a8a]">
        Layer Display Options
      </button>
      <div className="mt-[14px] pl-2">
        <div className="h-5 leading-5">Presets (Ctrl+Tab):</div>
        <Select label="Presets (Ctrl+Tab)" value="---" className="mt-0.5 mr-2 h-[26px]" />
        <div className="mt-[5px] h-5 leading-5">Viewports (Shift+Tab):</div>
        <Select label="Viewports (Shift+Tab)" value="---" className="mt-px mr-2 h-[26px]" />
      </div>
      <h3 className="mt-[12px] h-[25px] bg-[#bcbcbc] pl-1 text-[14px] leading-[25px]">Selection Filter</h3>
      <div className="mt-1.5 grid grid-cols-[105px_1fr] pl-[5px]">
        {left.map((l, i) => (
          <div key={l} className="contents">
            <div className="flex h-5">
              <Check label={l} on />
            </div>
            <div className="flex h-5">
              <Check label={right[i]} on={i > 0} />
            </div>
          </div>
        ))}
      </div>
    </aside>
  );
}

/* ---------- page ---------- */

const T = (icon: string, active = false): ToolDef => ({ icon, active });

const topTools: ToolDef[] = [
  T("save"), "sep", T("boardSetup"), "sep", T("page"), T("print"), T("plot"), "sep", T("undo"), T("redo"), "sep", T("find"), "sep",
  T("refresh"), T("zoomIn"), T("zoomOut"), T("zoomPage"), T("zoomObjects"), T("zoomTool"), "sep",
  T("rotCcw"), T("rotCw"), T("flipV"), T("flipH"), T("group"), T("ungroup"), T("lock"), T("unlock"), "sep",
  T("fpEditor"), T("update"), T("viewer3d"), "sep", T("updatePcb"), T("drc"), "sep", T("schematic"), "sep", T("console"),
];

const leftTools: ToolDef[] = [
  T("grid", true), T("gridOver", true), T("polar"), T("in"), T("mil"), T("mm", true), T("cursor"), "sep",
  T("angle"), "sep", T("ratsnest", true), T("curved"), "sep", T("netHl"), T("netColors"), "sep",
  T("zoneFill", true), T("zoneOutline"), "sep", T("padSketch"), T("viaSketch"), T("trackSketch"), "sep",
  T("layersMgr", true), T("tools"),
];

const rightTools: ToolDef[] = [T("image"), T("text"), T("textBox"), T("table"), T("dimension"), T("deleteTool"), "sep"];

const info: [string, string, string][] = [
  ["Type", "Through Via", "w-[117px]"],
  ["Net", "neopixel", "w-[95px]"],
  ["Resolved Netclass", "Default", "w-[157px]"],
  ["Layer", "F.Cu - B.Cu", "w-[108px]"],
  ["Diameter", "0.6000 mm", "w-[111px]"],
  ["Hole", "0.3000 mm", "w-[111px]"],
  ["Min Clearance: 0.4000 mm", "(from board minimum)", "w-[212px]"],
  ["Min Annular Width: 0.2750 mm", "(from board setup constraints)", "w-[260px]"],
];

const status: [string, string][] = [
  ["File 'D:\\fablab26\\kicad\\first\\pcbboard\\_autosave-pcbboard.kicad_pcb' saved.", "w-[588px]"],
  ["Z 40.06", "w-[97px]"],
  ["X 86.5000  Y 58.5000", "w-[203px]"],
  ["dx 86.5000  dy 58.5000  dist 104.4246", "w-[321px]"],
  ["grid 0.5000", "w-[234px]"],
  ["mm", "w-[77px]"],
  ["Select item(s)", "flex-1"],
];

const VSep = () => <div className="h-[34px] w-px shrink-0 bg-[#a8a8a8]" />;

export default function App() {
  return (
    <div className="relative flex h-screen flex-col overflow-hidden bg-[#f0f0f0] font-['Open_Sans',sans-serif] text-[14px] leading-5 text-[#333]">
      <header className="flex h-[25px] shrink-0 items-center bg-[#f4f4f4] pl-0.5 text-[#8a8a8a]">
        <svg viewBox="0 0 20 20" className="mt-1 size-5" aria-hidden="true">
          <rect width="20" height="20" rx="2" fill="#0f6b1c" />
          <path d="M3 3l4 5v9M9 2v6l4 4v6M16 3v13" stroke="#053a0b" strokeWidth="2" fill="none" />
          <circle cx="4" cy="12" r="1.600" fill="#e8d94a" />
          <circle cx="14" cy="7" r="1.400" fill="#e8d94a" />
        </svg>
        <h1 className="mt-1 ml-[7px]">*pcbboard — PCB Editor</h1>
        <div className="mt-1 ml-auto flex items-center gap-[42px] pr-[23px] text-[#777]">
          <button type="button" aria-label="Minimize"><Minus className="size-4" strokeWidth={1.3} /></button>
          <button type="button" aria-label="Restore">
            <svg viewBox="0 0 16 16" className="size-4" fill="none" stroke="currentColor" aria-hidden="true">
              <rect x="2" y="4.500" width="9" height="9" rx="1.500" />
              <path d="M5 4.500V3.500a1.500 1.500 0 0 1 1.500-1.500h5.500a2 2 0 0 1 2 2v5.500a1.500 1.500 0 0 1-1.500 1.500H11" />
            </svg>
          </button>
          <button type="button" aria-label="Close window"><X className="size-[18px]" strokeWidth={1.3} /></button>
        </div>
      </header>

      <nav className="flex h-[30px] shrink-0 items-center gap-[18px] bg-white pt-1 pl-[9px] text-[#777]">
        {["File", "Edit", "View", "Place", "Route", "Inspect", "Tools", "Preferences", "Help"].map((m) => (
          <button key={m} type="button">{m}</button>
        ))}
      </nav>

      <div className="flex h-[43px] shrink-0 items-center gap-[3px] pl-1.5">
        {topTools.map((t, i) =>
          t === "sep" ? (
            <div key={i} className="flex w-[6px] shrink-0 justify-center"><VSep /></div>
          ) : (
            <ToolButton key={i} icon={t.icon} active={t.active} />
          )
        )}
      </div>

      <div className="flex h-[45px] shrink-0 items-center border-b border-[#c4c4c4]">
        <Select label="Track width" value="Track: use netclass width" pad="pl-0.5" className="ml-2 h-[30px] w-[217px]" />
        <div className="mr-1 ml-1"><ToolButton icon="autoTrack" active /></div>
        <VSep />
        <Select label="Via size" value="Via: use netclass sizes" pad="pl-1" className="ml-1.5 h-[30px] w-[187px]" />
        <div className="ml-1"><VSep /></div>
        <Select label="Active layer" value="F.Cu (PgUp)" swatch="#c83434" className="ml-1.5 h-[28px] w-[159px]" />
        <div className="mx-1"><ToolButton icon="layerPair" /></div>
        <VSep />
        <Select label="Grid" value="0.5000 mm (19.69 mils)" pad="pl-1" className="ml-1.5 h-[30px] w-[209px]" />
        <div className="ml-1.5"><VSep /></div>
        <Select label="Zoom" value="Zoom 35.00" pad="pl-0.5" className="ml-2 h-[30px] w-[117px]" />
        <div className="ml-[3px] h-full flex-1 bg-[#dedede]" />
      </div>

      <main className="flex min-h-0 flex-1">
        <div className="flex w-[45px] shrink-0 flex-col gap-[3px] pt-[5px] pl-[3px]">
          <VTools items={leftTools} />
        </div>
        <div className="min-w-0 flex-1">
          <Board />
        </div>
        <div className="flex w-[49px] shrink-0 flex-col justify-between pt-[5px] pb-[18px] pl-1">
          <ToolButton icon="select" active />
          <div className="flex flex-col gap-[3px]">
            <VTools items={rightTools} />
          </div>
        </div>
        <SidePanel />
      </main>

      <div className="flex h-[43px] shrink-0 items-center pl-[15px] text-[#777]">
        {info.map(([a, b, w]) => (
          <div key={a} className={`shrink-0 whitespace-nowrap ${w}`}>
            <div>{a}</div>
            <div>{b}</div>
          </div>
        ))}
      </div>
      <footer className="flex h-[26px] shrink-0 items-center border-t border-[#e0e0e0] bg-[#f4f4f4] pl-px">
        {status.map(([s, w]) => (
          <span key={s} className={`shrink-0 whitespace-pre ${w}`}>{s}</span>
        ))}
      </footer>

      <DrcDialog />
      <TrackViaDialog />
    </div>
  );
}
